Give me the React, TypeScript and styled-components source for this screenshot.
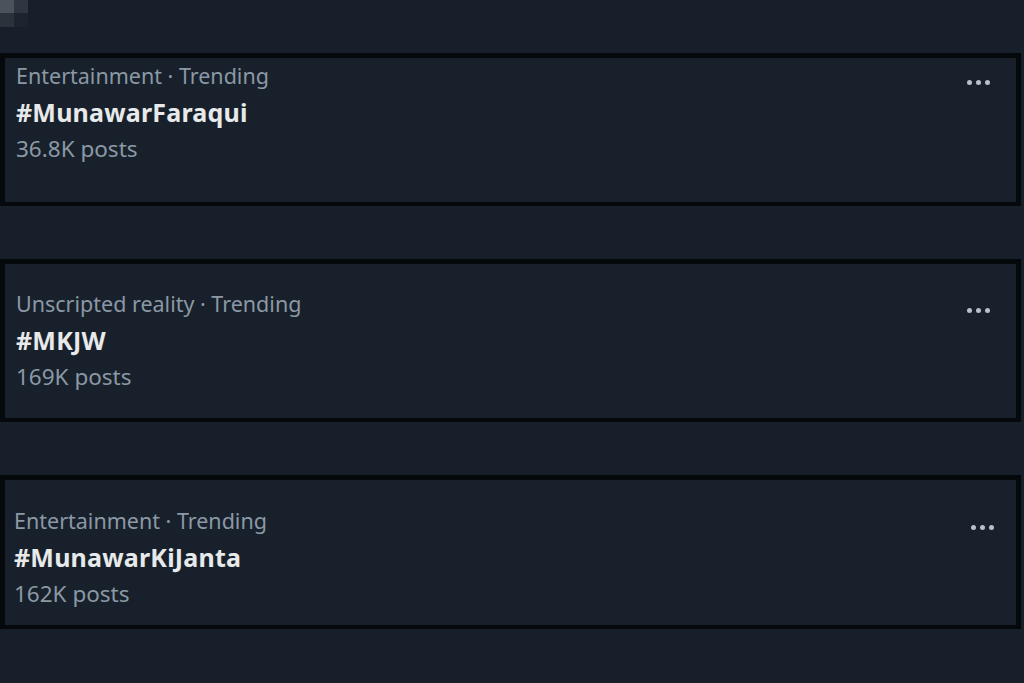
import styled, { createGlobalStyle } from "styled-components";

const GlobalStyle = createGlobalStyle`
  html, body {
    margin: 0;
    padding: 0;
    background: #17202a;
  }
  body {
    font-family: "Noto Sans", "Open Sans", sans-serif;
    width: 1024px;
    height: 683px;
    overflow: hidden;
  }
`;

const Page = styled.div`
  width: 1024px;
  height: 683px;
  background: #17202a;
  display: flex;
  flex-direction: column;
`;

const Top = styled.div`
  height: 53px;
  flex-shrink: 0;
`;

const Blur = styled.div`
  display: grid;
  grid-template-columns: 14px 14px;
  grid-template-rows: 13px 14px;
`;

const Pixel = styled.div<{ $c: string }>`
  background: ${(p) => p.$c};
`;

const List = styled.div`
  display: flex;
  flex-direction: column;
  gap: 53px;
`;

const Card = styled.div<{ $h: number; $pt: number; $pl: number; $pr: number }>`
  box-sizing: border-box;
  width: 1021px;
  height: ${(p) => p.$h}px;
  border: 5px solid #06090c;
  border-bottom-width: 4px;
  background: #18212b;
  padding: ${(p) => `${p.$pt}px ${p.$pr}px 0 ${p.$pl}px`};
`;

const Head = styled.div`
  display: flex;
  align-items: center;
  justify-content: space-between;
  height: 36px;
`;

const Category = styled.div`
  font-size: 21.5px;
  color: #8b98a5;
  line-height: 36px;
`;

const Tag = styled.div`
  font-size: 25px;
  font-weight: 700;
  color: #e7e9ea;
  line-height: 36px;
  letter-spacing: 0.2px;
`;

const Posts = styled.div`
  font-size: 22.5px;
  color: #8b98a5;
  line-height: 38px;
`;

const More = styled.div`
  display: flex;
  gap: 4px;
  margin-top: 12px;
`;

const Dot = styled.span`
  width: 5px;
  height: 5px;
  border-radius: 50%;
  background: #b8c0c8;
`;

const trends = [
  { cat: "Entertainment · Trending", tag: "#MunawarFaraqui", posts: "36.8K posts", h: 153, pt: 0, pl: 11, pr: 26 },
  { cat: "Unscripted reality · Trending", tag: "#MKJW", posts: "169K posts", h: 163, pt: 22, pl: 11, pr: 26 },
  { cat: "Entertainment · Trending", tag: "#MunawarKiJanta", posts: "162K posts", h: 154, pt: 23, pl: 9, pr: 22 },
];

export default function App() {
  return (
    <>
      <GlobalStyle />
      <Page>
        <Top>
          <Blur>
            <Pixel $c="#4a525c" />
            <Pixel $c="#2e3640" />
            <Pixel $c="#2a323c" />
            <Pixel $c="#1c252f" />
          </Blur>
        </Top>
        <List>
          {trends.map((t) => (
            <Card key={t.tag} $h={t.h} $pt={t.pt} $pl={t.pl} $pr={t.pr}>
              <Head>
                <Category>{t.cat}</Category>
                <More>
                  <Dot />
                  <Dot />
                  <Dot />
                </More>
              </Head>
              <Tag>{t.tag}</Tag>
              <Posts>{t.posts}</Posts>
            </Card>
          ))}
        </List>
      </Page>
    </>
  );
}
